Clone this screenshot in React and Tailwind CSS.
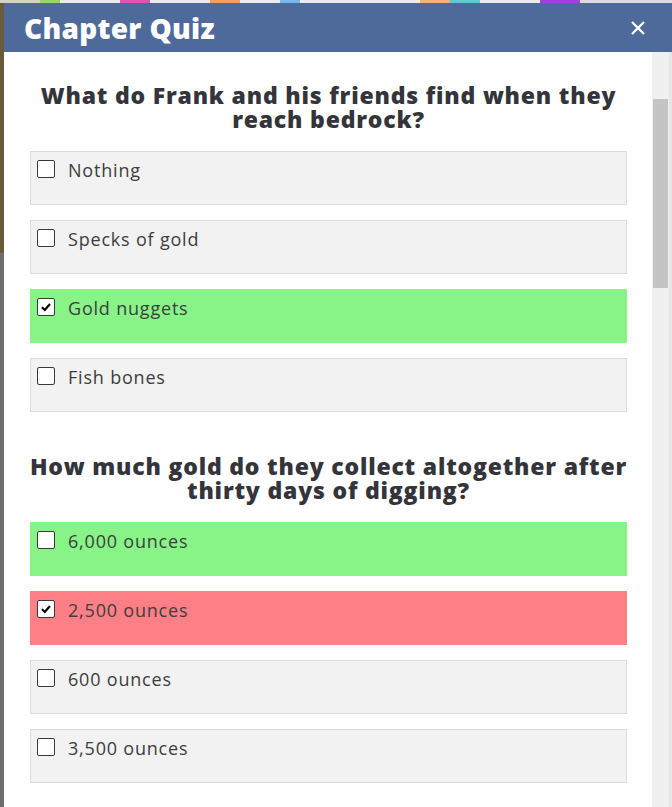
const questions = [
  {
    text: ["What do Frank and his friends find when they", "reach bedrock?"],
    options: [
      { label: "Nothing" },
      { label: "Specks of gold" },
      { label: "Gold nuggets", checked: true, state: "right" },
      { label: "Fish bones" },
    ],
  },
  {
    text: ["How much gold do they collect altogether after", "thirty days of digging?"],
    options: [
      { label: "6,000 ounces", state: "right" },
      { label: "2,500 ounces", checked: true, state: "wrong" },
      { label: "600 ounces" },
      { label: "3,500 ounces" },
    ],
  },
];

const Checkbox = ({ checked }) => (
  <div className="w-[18px] h-[18px] shrink-0 border-[1.5px] border-[#3a3a3a] rounded-[2px] bg-white flex items-center justify-center">
    {checked && (
      <svg width="12" height="12" viewBox="0 0 12 12">
        <path d="M2 6.3 L4.8 9 L10 3" fill="none" stroke="#000" strokeWidth="2.2" />
      </svg>
    )}
  </div>
);

const Option = ({ label, checked, state }) => {
  const bg =
    state === "right"
      ? "bg-[#88f488] border-[#88f488]"
      : state === "wrong"
      ? "bg-[#ff7f86] border-[#ff7f86]"
      : "bg-[#f2f2f2] border-[#dcdcdc]";
  return (
    <div className={`h-[54px] border ${bg} pl-[6px] pt-[7px]`}>
      <div className="flex items-center gap-[13px] h-[20px]">
        <Checkbox checked={checked} />
        <span className="text-[18px] leading-[22px] font-medium text-[#3d3d3d] tracking-[0.8px] pt-[2px]">
          {label}
        </span>
      </div>
    </div>
  );
};

const App = () => {
  return (
    <div className="w-[672px] h-[807px] overflow-hidden flex flex-col bg-[#777] font-['Open_Sans',sans-serif]">
      {/* strip of page behind the modal */}
      <div className="h-[3px] flex shrink-0 bg-[#e8e8e8]">
        <div className="w-[40px] bg-[#d9d2c0]" />
        <div className="w-[20px] bg-[#9bd46a]" />
        <div className="w-[60px] bg-[#ececec]" />
        <div className="w-[30px] bg-[#e94fb0]" />
        <div className="w-[60px] bg-[#ececec]" />
        <div className="w-[30px] bg-[#f0a060]" />
        <div className="w-[40px] bg-[#eee]" />
        <div className="w-[20px] bg-[#7ab7e8]" />
        <div className="w-[120px] bg-[#ececec]" />
        <div className="w-[30px] bg-[#f2b07a]" />
        <div className="w-[30px] bg-[#60c8d0]" />
        <div className="w-[60px] bg-[#ececec]" />
        <div className="w-[40px] bg-[#a040e0]" />
        <div className="flex-1 bg-[#ddd]" />
      </div>

      <div className="flex flex-1 min-h-0">
        <div className="w-[4px] flex flex-col shrink-0">
          <div className="h-[250px] bg-[#6b5a3a]" />
          <div className="flex-1 bg-[#6e6e6e]" />
        </div>

        <div className="flex-1 flex flex-col bg-white min-w-0">
          {/* header */}
          <div className="h-[49px] shrink-0 bg-[#4e6a9b] flex items-center justify-between pl-[20px] pr-[26px]">
            <h1 className="text-white text-[28px] font-extrabold tracking-[0.3px] leading-none">
              Chapter Quiz
            </h1>
            <svg width="16" height="16" viewBox="0 0 16 16">
              <path d="M2 2 L14 14 M14 2 L2 14" stroke="#fff" strokeWidth="2.4" />
            </svg>
          </div>

          <div className="flex flex-1 min-h-0">
            <div className="flex-1 overflow-hidden pt-[31px] pl-[26px] pr-[25px]">
              {questions.map((q, qi) => (
                <div key={qi} className={qi > 0 ? "mt-[42px]" : ""}>
                  <h2 className="text-center text-[23px] leading-[24px] font-extrabold tracking-[0.8px] text-[#33353a] mb-[20px] whitespace-nowrap -mx-[20px]">
                    {q.text[0]}
                    <br />
                    {q.text[1]}
                  </h2>
                  <div className="flex flex-col gap-[15px]">
                    {q.options.map((o, oi) => (
                      <Option key={oi} {...o} />
                    ))}
                  </div>
                </div>
              ))}
            </div>

            {/* scrollbar */}
            <div className="w-[17px] shrink-0 bg-[#f0f0f0] pt-[47px] pl-[1px]">
              <div className="h-[189px] w-[15px] bg-[#c4c4c4]" />
            </div>
            <div className="w-[3px] shrink-0 bg-[#e6e6e6]" />
          </div>
        </div>
      </div>
    </div>
  );
};

export default App;
